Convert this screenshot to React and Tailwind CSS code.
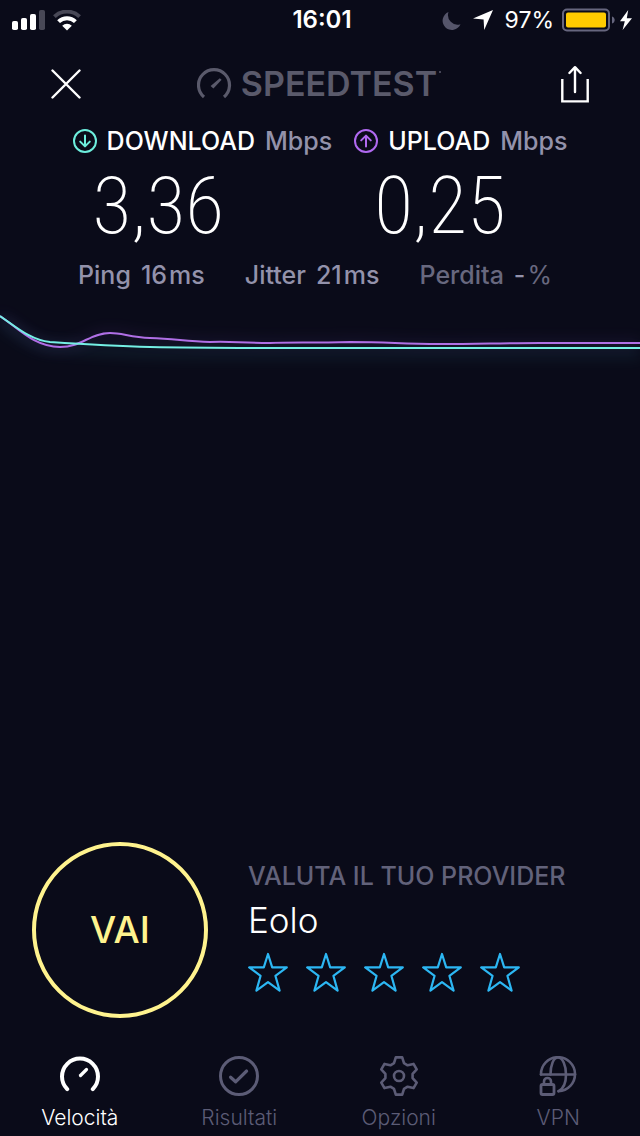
import React from "react";

function gearPath() {
  const tooth = [
    [-5, -12.8],
    [-3.2, -18.6],
    [3.2, -18.6],
    [5, -12.8],
  ];
  const parts = [];
  for (let i = 0; i < 6; i += 1) {
    const a = (i * Math.PI) / 3;
    const pts = tooth.map(([x, y]) =>
      [20 + x * Math.cos(a) - y * Math.sin(a), 20 + x * Math.sin(a) + y * Math.cos(a)]
        .map((n) => n.toFixed(2))
        .join(" ")
    );
    parts.push((i === 0 ? "M" : "L") + pts.join(" L"));
  }
  return parts.join(" ") + " Z";
}

function SignalIcon() {
  return (
    <svg className="h-5 w-[33px]" viewBox="0 0 33 20" fill="#fff" aria-hidden="true">
      <rect x="0" y="11" width="6" height="9" rx="1.8" />
      <rect x="9" y="8" width="6" height="12" rx="1.8" />
      <rect x="18" y="4" width="6" height="16" rx="1.8" />
      <rect x="27" y="0" width="6" height="20" rx="1.8" fill="#484856" />
    </svg>
  );
}

function WifiIcon() {
  return (
    <svg className="h-[21px] w-7" viewBox="0 0 28 21" fill="none" aria-hidden="true">
      <path d="M1.4 6.6a18.4 18.4 0 0 1 25.2 0" stroke="#484856" strokeWidth="4" />
      <path d="M5.6 11.6a12 12 0 0 1 16.8 0" stroke="#fff" strokeWidth="4" />
      <path d="M14 20.4l-4.8-4.6a6.8 6.8 0 0 1 9.6 0z" fill="#fff" />
    </svg>
  );
}

function StatusBar() {
  return (
    <div className="grid h-10 grid-cols-[1fr_auto_1fr] items-center pr-2 pl-3">
      <div className="flex items-center gap-2">
        <SignalIcon />
        <WifiIcon />
      </div>
      <time className="text-[24px] leading-6 font-semibold">16:01</time>
      <div className="flex items-center justify-end">
        <svg className="mr-3 h-[19px] w-[19px]" viewBox="0 0 19 19" fill="#55556a" aria-hidden="true">
          <path d="M6.5 1A9.3 9.3 0 1 0 18.5 13.2 9.6 9.6 0 0 1 6.5 1z" />
        </svg>
        <svg className="mr-3 h-5 w-5" viewBox="0 0 20 20" fill="#fff" aria-hidden="true">
          <path d="M20 0L11.2 20 10.6 9.4 0 8.6z" />
        </svg>
        <span className="mr-2 text-[23px] leading-6">97%</span>
        <svg className="mr-1 h-6 w-[54px]" viewBox="0 0 54 24" aria-hidden="true">
          <rect x="1" y="1.5" width="46" height="21" rx="4" fill="none" stroke="#66667e" strokeWidth="2" />
          <rect x="4" y="4.5" width="40" height="15" rx="2" fill="#ffcb00" />
          <path d="M50 8.5c3.6 1 3.6 6 0 7z" fill="#66667e" />
        </svg>
        <svg className="h-5 w-3" viewBox="0 0 12 20" fill="#fff" aria-hidden="true">
          <path d="M8.2 0L0 11.2h4.8L2.6 20 12 8.2H6.8z" />
        </svg>
      </div>
    </div>
  );
}

function Header() {
  return (
    <header className="flex h-[87px] items-center justify-between px-[51px]">
      <button type="button" aria-label="Chiudi">
        <svg className="h-[30px] w-[30px]" viewBox="0 0 30 30" stroke="#fff" strokeWidth="2.4" strokeLinecap="round">
          <path d="M1.5 1.5l27 27M28.5 1.5l-27 27" />
        </svg>
      </button>
      <div className="flex items-center gap-2 pr-2 text-[#5a5a6b]">
        <svg className="h-8 w-9" viewBox="0 0 36 32" fill="none" stroke="currentColor" aria-hidden="true">
          <path d="M7 29A15.5 15.5 0 1 1 27 29" strokeWidth="3.2" />
          <path d="M22.8 10.2l1.8 1.6-8.2 8.8-2.8-2.6z" fill="currentColor" stroke="none" />
        </svg>
        <div className="relative text-[34px] leading-10 font-semibold">
          SPEEDTEST
          <span className="absolute top-[7px] -right-1 h-0.5 w-0.5 rounded-full bg-[#5a5a6b]" />
        </div>
      </div>
      <button type="button" aria-label="Condividi">
        <svg className="h-[38px] w-7" viewBox="0 0 28 38" fill="none" stroke="#fff" strokeWidth="2.4">
          <path d="M1.3 14v22.4h25.4V14" />
          <path d="M14 27V2.6M8.4 8L14 2.2 19.6 8" strokeLinecap="round" strokeLinejoin="round" />
        </svg>
      </button>
    </header>
  );
}

function Arrow({ up, color }) {
  return (
    <svg className="h-6 w-6" viewBox="0 0 24 24" fill="none" stroke={color} strokeWidth="2" aria-hidden="true">
      <circle cx="12" cy="12" r="11" />
      <path
        d={up ? "M12 17.5V7M7.2 11.4L12 6.6l4.8 4.8" : "M12 6.5V17M7.2 12.6l4.8 4.8 4.8-4.8"}
        strokeLinecap="round"
        strokeLinejoin="round"
      />
    </svg>
  );
}

function Speed({ up, color, label, value }) {
  return (
    <div>
      <h2 className="flex h-7 items-center gap-2.5 text-[25px] leading-7 font-medium whitespace-nowrap">
        <Arrow up={up} color={color} />
        <span>{label}</span>
        <span className="text-[#9392ab]">Mbps</span>
      </h2>
      <p className="pl-5 font-['Roboto_Condensed','Roboto',sans-serif] text-[80px] leading-[102px] font-extralight">
        {value}
      </p>
    </div>
  );
}

function Stat({ name, children, dim }) {
  return (
    <div className={dim ? "flex gap-2.5 text-[#68687f]" : "flex gap-2.5 text-[#9392ab]"}>
      <dt>{name}</dt>
      <dd className="flex gap-0.5">{children}</dd>
    </div>
  );
}

function Chart() {
  const down =
    "M0 16C15 26 30 40 50 42C80 44 110 46 150 47C200 48 240 48 300 48H640";
  const upload =
    "M0 16C18 28 34 47 60 47C82 47 90 33 110 33C122 33 130 37 150 38C175 39 185 41 210 42C230 41 240 43 270 43C290 42 310 43 350 42C390 42 400 44 440 44C480 44 500 43 540 43H640";
  return (
    <svg className="h-[80px] w-full" viewBox="0 0 640 80" preserveAspectRatio="none" fill="none" aria-hidden="true">
      <defs>
        <filter id="glow" filterUnits="userSpaceOnUse" x="-20" y="-10" width="680" height="100">
          <feGaussianBlur stdDeviation="7" />
        </filter>
      </defs>
      <path d={down} transform="translate(0 5)" stroke="#3aa6b8" strokeWidth="8" opacity="0.14" filter="url(#glow)" />
      <path d={upload} stroke="#7a3fb0" strokeWidth="5" opacity="0.2" filter="url(#glow)" />
      <path d={upload} stroke="#b06fe6" strokeWidth="2" />
      <path d={down} stroke="#74efe4" strokeWidth="2" />
    </svg>
  );
}

function Provider() {
  return (
    <section className="flex items-center gap-10 px-8">
      <button
        type="button"
        className="h-44 w-44 shrink-0 rounded-full border-4 border-[#fff38e] text-[37px] leading-10 font-medium text-[#fff38e]"
      >
        VAI
      </button>
      <div className="flex flex-col pb-2">
        <h2 className="text-[25px] leading-8 font-medium whitespace-nowrap text-[#62627a]">VALUTA IL TUO PROVIDER</h2>
        <p className="mt-2 text-[35px] leading-10 font-light">Eolo</p>
        <div className="mt-3 flex gap-[18px]">
          {[1, 2, 3, 4, 5].map((n) => (
            <button key={n} type="button" aria-label={`${n} su 5`}>
              <svg className="h-10 w-10" viewBox="0 0 40 40" fill="none" stroke="#2cb7f3" strokeWidth="2.2" strokeLinejoin="round">
                <path d="M20 2L24.2 15.4H38.8L27.4 23.8 31.6 38.6 20 30.2 8.4 38.6 12.6 23.8 1.2 15.4H15.8z" />
              </svg>
            </button>
          ))}
        </div>
      </div>
    </section>
  );
}

const icons = {
  speed: (
    <>
      <path d="M7.2 33.2A18 18 0 1 1 32.8 33.2" strokeWidth="4" />
      <path d="M20.5 19.5l6-6" strokeWidth="3.2" />
    </>
  ),
  results: (
    <>
      <circle cx="20" cy="20" r="18.5" strokeWidth="3" />
      <path d="M11.6 21.2l5 4.6L27.6 15" strokeWidth="3.2" />
    </>
  ),
  options: (
    <>
      <path d={gearPath()} strokeWidth="2.6" />
      <circle cx="20" cy="20" r="5" strokeWidth="2.6" />
    </>
  ),
  vpn: (
    <>
      <path d="M3 18.5A17 17 0 1 1 20.5 35.2" strokeWidth="2.6" />
      <path d="M3 18.5H37" strokeWidth="2.6" />
      <path d="M12.5 18.5C12.5 9 15.5 1.5 20 1.5S28 9 28 18.5 25 33 20.5 35.2" strokeWidth="2.6" />
      <rect x="3" y="28.5" width="13" height="10" rx="1.5" strokeWidth="2.8" />
      <path d="M6 28v-2.5a3.5 3.5 0 0 1 7 0V28" strokeWidth="2.6" />
    </>
  ),
};

const tabs = [
  ["speed", "Velocità", true],
  ["results", "Risultati"],
  ["options", "Opzioni"],
  ["vpn", "VPN"],
];

function TabBar() {
  return (
    <nav className="mt-[30px] grid grid-cols-4 pt-2 pr-0.5 pb-1">
      {tabs.map(([id, label, active]) => (
        <a
          key={id}
          href={`#${id}`}
          aria-current={active ? "page" : undefined}
          className={
            active
              ? "flex flex-col items-center gap-2 text-white"
              : "flex flex-col items-center gap-2 text-[#5c5c76]"
          }
        >
          <svg
            className="h-10 w-10"
            viewBox="0 0 40 40"
            fill="none"
            stroke="currentColor"
            strokeLinecap="round"
            strokeLinejoin="round"
            aria-hidden="true"
          >
            {icons[id]}
          </svg>
          <span className="text-[21px] leading-7 font-light">{label}</span>
        </a>
      ))}
    </nav>
  );
}

export default function App() {
  return (
    <div className="flex min-h-screen flex-col bg-[#0a0b19] font-['Inter','Liberation_Sans',sans-serif] text-white">
      <StatusBar />
      <Header />
      <main className="flex grow flex-col">
        <section className="flex justify-center gap-[22px]">
          <Speed color="#6deedd" label="DOWNLOAD" value="3,36" />
          <Speed up color="#b069f0" label="UPLOAD" value="0,25" />
        </section>
        <dl className="flex items-center justify-between pr-[88px] pl-[78px] text-[25px] leading-9 font-medium">
          <Stat name="Ping">
            <span>16</span>
            <span>ms</span>
          </Stat>
          <Stat name="Jitter">
            <span>21</span>
            <span>ms</span>
          </Stat>
          <Stat name="Perdita" dim>
            <span className="text-[#9392ab]">-</span>
            <span className="font-normal">%</span>
          </Stat>
        </dl>
        <div className="pt-[7px]">
          <Chart />
        </div>
        <div className="mt-auto">
          <Provider />
        </div>
      </main>
      <TabBar />
    </div>
  );
}
